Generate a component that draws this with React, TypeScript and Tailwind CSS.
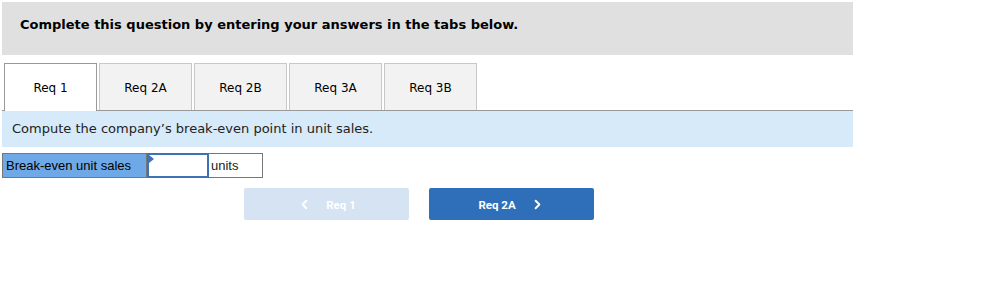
import { ChevronLeft, ChevronRight } from 'lucide-react'

const tabs = ['Req 1', 'Req 2A', 'Req 2B', 'Req 3A', 'Req 3B']

export default function App() {
  return (
    <div className="w-[993px] h-[291px] bg-white pt-[2px] pl-[2px] font-['DejaVu_Sans',sans-serif] text-black">
      <div className="w-[851px]">
        {/* Header */}
        <div className="h-[53px] bg-[#e0e0e0] pl-[18px] pt-[15px]">
          <p className="text-[13px] font-bold leading-[16px]">Complete this question by entering your answers in the tabs below.</p>
        </div>

        {/* Tabs */}
        <div className="mt-[8px] flex items-end border-b border-[#999]">
          <div className="w-[2px]" />
          {tabs.map((t, i) => (
            <div
              key={t}
              className={
                i === 0
                  ? 'w-[93px] h-[48px] mb-[-1px] pt-[1px] bg-white border border-b-0 border-[#999] flex items-center justify-center text-[12px]'
                  : 'ml-[2px] w-[93px] h-[47px] pt-[1px] bg-[#f2f2f2] border border-b-0 border-[#c8c8c8] flex items-center justify-center text-[12px]'
              }
            >
              {t}
            </div>
          ))}
        </div>

        {/* Instruction */}
        <div className="h-[36px] bg-[#d7eaf9] pl-[10px] flex items-center">
          <p className="text-[13px] text-[#222]">Compute the company’s break-even point in unit sales.</p>
        </div>

        {/* Input row */}
        <div className="mt-[6px] flex h-[25px] font-['Liberation_Sans',sans-serif] text-[13px]">
          <div className="w-[145px] bg-[#6fa8e6] border border-[#777] flex items-center pl-[3px]">Break-even unit sales</div>
          <div className="relative w-[62px] border-2 border-[#3d72b4] bg-white">
            <span className="absolute left-0 top-0 w-0 h-0 border-t-[4px] border-b-[4px] border-l-[5px] border-t-transparent border-b-transparent border-l-[#3d72b4]" />
          </div>
          <div className="w-[54px] border border-[#777] border-l-0 flex items-center pl-[2px] text-[#222]">units</div>
        </div>

        {/* Nav buttons */}
        <div className="mt-[10px] flex pl-[242px] gap-[20px] font-['Roboto',sans-serif] font-bold text-[11.5px] text-white">
          <div className="w-[165px] h-[32px] pt-[3px] rounded-[2px] bg-[#d6e3f2] flex items-center justify-center gap-[14px]">
            <ChevronLeft className="w-[15px] h-[15px] -mt-[3px]" strokeWidth={3} />
            <span>Req 1</span>
          </div>
          <div className="w-[165px] h-[32px] pt-[3px] rounded-[2px] bg-[#2f6fba] flex items-center justify-center gap-[14px]">
            <span>Req 2A</span>
            <ChevronRight className="w-[15px] h-[15px] -mt-[3px]" strokeWidth={3} />
          </div>
        </div>
      </div>
    </div>
  )
}
